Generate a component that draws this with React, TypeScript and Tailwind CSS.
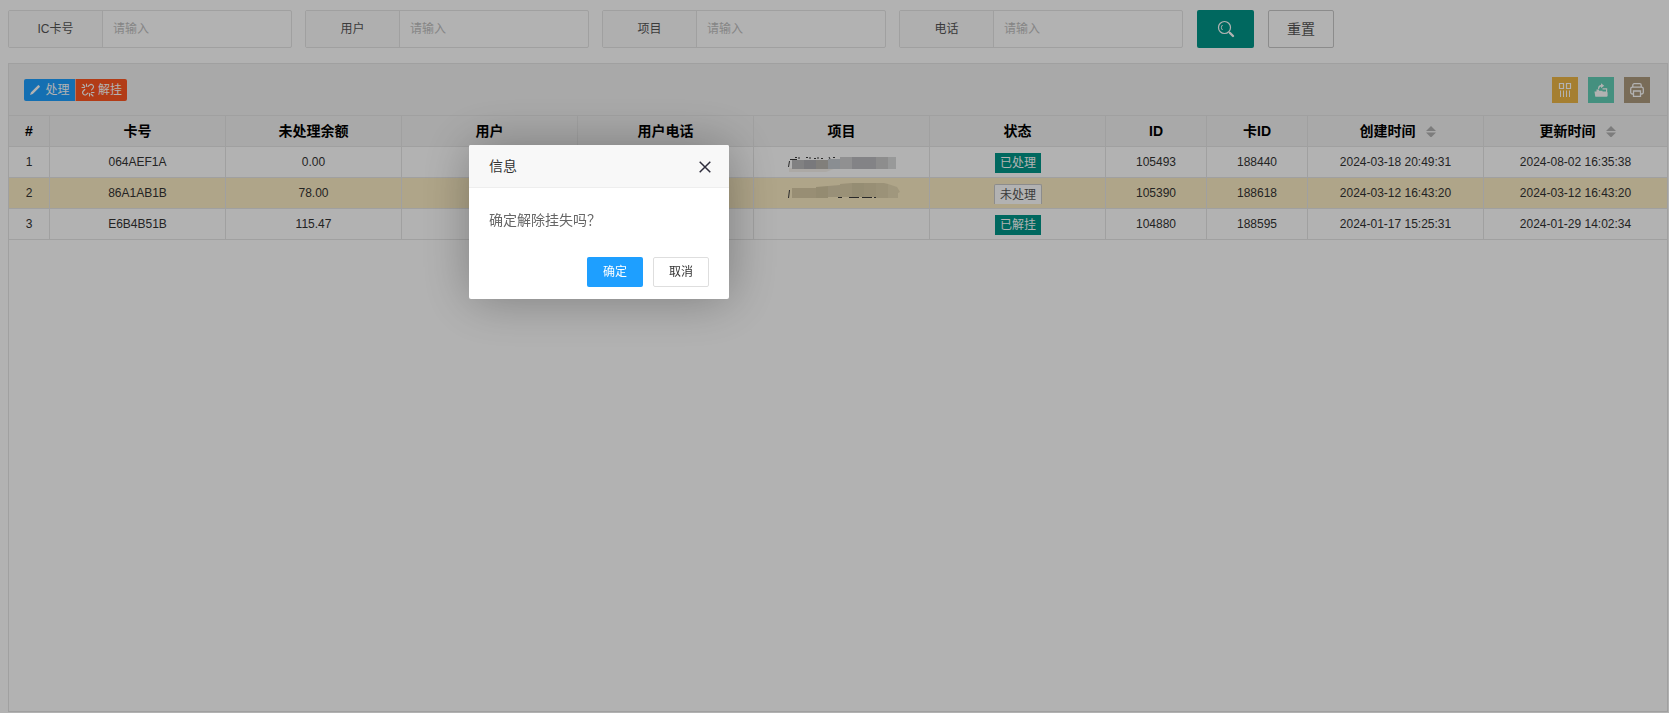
import React, { useState } from 'react';

interface Row {
  no: number;
  card: string;
  balance: string;
  status: string;
  id: string;
  cardId: string;
  created: string;
  updated: string;
}

const rows: Row[] = [
  { no: 1, card: '064AEF1A', balance: '0.00', status: '已处理', id: '105493', cardId: '188440', created: '2024-03-18 20:49:31', updated: '2024-08-02 16:35:38' },
  { no: 2, card: '86A1AB1B', balance: '78.00', status: '未处理', id: '105390', cardId: '188618', created: '2024-03-12 16:43:20', updated: '2024-03-12 16:43:20' },
  { no: 3, card: 'E6B4B51B', balance: '115.47', status: '已解挂', id: '104880', cardId: '188595', created: '2024-01-17 15:25:31', updated: '2024-01-29 14:02:34' },
];

const columns = [
  { title: '#', width: 'w-[41px]' },
  { title: '卡号', width: 'w-[176px]' },
  { title: '未处理余额', width: 'w-[176px]' },
  { title: '用户', width: 'w-[176px]' },
  { title: '用户电话', width: 'w-[176px]' },
  { title: '项目', width: 'w-[176px]' },
  { title: '状态', width: 'w-[176px]' },
  { title: 'ID', width: 'w-[101px]' },
  { title: '卡ID', width: 'w-[101px]' },
  { title: '创建时间', width: 'w-[176px]', sort: true },
  { title: '更新时间', width: '', sort: true },
];

const filters = [
  { key: 'ic', label: 'IC卡号' },
  { key: 'user', label: '用户' },
  { key: 'project', label: '项目' },
  { key: 'phone', label: '电话' },
];

const SearchIcon = () => (
  <svg width="18" height="18" viewBox="0 0 18 18" fill="none" stroke="currentColor">
    <circle cx="7.5" cy="7.5" r="6" strokeWidth="1.2" />
    <path d="M5.5 5A3.400 3.400 0 0 0 5.500 10" strokeWidth="1" />
    <path d="M12 12l1 1" strokeWidth="1.2" />
    <path d="M13 13l3 3" strokeWidth="2.4" strokeLinecap="round" />
  </svg>
);

const PencilIcon = () => (
  <svg width="12" height="12" viewBox="0 0 12 12" fill="currentColor">
    <path d="M1 11l1-2.800L8.800 1.400a.9.9 0 0 1 1.300 0l.5.5a.9.9 0 0 1 0 1.300L3.800 10z" />
  </svg>
);

const UnlinkIcon = () => (
  <svg width="14" height="14" viewBox="0 0 14 14" fill="none" stroke="currentColor" strokeWidth="1.1" strokeLinecap="round">
    <path d="M7 3.500L8.500 2.200a2.300 2.300 0 0 1 3.300 3.200L10.500 7" />
    <path d="M3.800 6.500L2.300 8a2.300 2.300 0 0 0 3.200 3.300L7 10" />
    <path d="M5.500 1v2.200M1 4.500h2.500M2 1.500l1.800 1.800M8.500 10.500V13M10.500 9.500H13M10 11l2 2" />
  </svg>
);

const ColumnsIcon = () => (
  <svg width="14" height="14" viewBox="0 0 14 14" fill="none" stroke="currentColor">
    <path d="M1.500.500h4v5h-4zM8.500.500h4v5h-4z" strokeWidth="1.200" />
    <path d="M2.500 7.500V14M5.500 7.500V14M8.500 7.500V14M11.500 7.500V14" />
  </svg>
);

const ExportIcon = () => (
  <svg width="14" height="14" viewBox="0 0 14 14" fill="currentColor">
    <path d="M.5 8.500h12l1 1v3.500a.8.8 0 0 1-.8.800H2a.8.8 0 0 1-.8-.6z" />
    <path d="M2.500 9V6.500H5v1.300h3.500V9z" />
    <path d="M8.500 5.200h4.700V13h-1.200V6.400H8.500z" />
    <path d="M4 6C4 3 5.300 2 7 2V.300l3.200 2.500L7 5.300V3.800C6 3.800 5.300 4.400 5.200 6z" />
  </svg>
);

const PrintIcon = () => (
  <svg width="14" height="14" viewBox="0 0 14 14" fill="none" stroke="currentColor" strokeWidth="1.3">
    <path d="M2.800 4V2.200A1.500 1.500 0 0 1 4.300.7h5.400a1.500 1.500 0 0 1 1.500 1.500V4" />
    <path d="M3.500 11h-1A1.800 1.800 0 0 1 .7 9.200V6a1.800 1.800 0 0 1 1.800-1.800h9A1.800 1.800 0 0 1 13.300 6v3.200a1.800 1.800 0 0 1-1.800 1.800h-1" />
    <path d="M3.500 8h7v5.300h-7z" />
  </svg>
);

const CloseIcon = () => (
  <svg width="12" height="14" viewBox="0 -2 12 14" fill="none" stroke="#2e2d3c" strokeWidth="1.5">
    <path d="M.7.7l10.600 10.600M11.300.7L.7 11.300" />
  </svg>
);

const SortIcon = () => (
  <svg width="10" height="12" viewBox="0 -1 10 12" fill="#b2b2b2">
    <path d="M0 5l5-5 5 5zM0 6.500h10l-5 5z" />
  </svg>
);

const tools = [
  { name: '筛选列', bg: 'bg-[#ecb647]', icon: <ColumnsIcon /> },
  { name: '导出', bg: 'bg-[#62cfb6]', icon: <ExportIcon /> },
  { name: '打印', bg: 'bg-[#ae9b7f]', icon: <PrintIcon /> },
];

// masked project names
const MaskedName = ({ no }: { no: number }) => {
  if (no === 1) {
    return (
      <svg className="block" width="114" height="20" viewBox="0 0 114 20">
        <path d="M.5 15l1-6M2 7.500h7M7 5.500h2M11 5v2M18 5.500h2M22 5v2M26 6.500h2M30 5v2M33 6.500h2M41 5l1 2M45 5.500h2" stroke="#3b3b3b" fill="none" />
        <path d="M1 16h47l-10 4H1z" fill="#f2eee6" opacity=".7" />
        <path d="M4 8h12v9H4z" fill="#b9b9bb" />
        <path d="M16 8h12v9H16z" fill="#aeaeb2" />
        <path d="M28 8h12v9H28z" fill="#b9b7b0" />
        <path d="M40 7h12v10H40z" fill="#c6ccd2" />
        <path d="M52 5h12v12H52z" fill="#cfcfd0" />
        <path d="M64 5h24v12H64z" fill="#bcbcc0" />
        <path d="M88 5h12v12H88z" fill="#cacaca" />
        <path d="M100 5h8v12h-8z" fill="#dadcdc" />
      </svg>
    );
  }
  if (no === 2) {
    return (
      <svg className="block" width="114" height="20" viewBox="0 0 114 20">
        <path d="M.5 15l1-8M50 14.500h4M61 14.500h10M74 14.500h10M86 14.500h2" stroke="#3b3b3b" fill="none" />
        <path d="M4 5h24V4v11H4z" fill="#dacca7" />
        <path d="M28 4l12-1v12H28z" fill="#d5c8a3" />
        <path d="M40 3l12-1v12H40z" fill="#dccfac" />
        <path d="M52 1l12-1v14H52z" fill="#ddd0ab" />
        <path d="M64 0h12v14H64z" fill="#d6caa5" />
        <path d="M76 0h12v14H76z" fill="#dacda8" />
        <path d="M88 0h8l4 1v14H88z" fill="#dfd2ad" />
        <path d="M100 1l9 3 3 5-2 1v5h-10z" fill="#e5d8b3" />
      </svg>
    );
  }
  return null;
};

const StatusTag = ({ status }: { status: string }) => {
  if (status === '未处理') {
    return (
      <button type="button" className="h-[20px] px-[5px] border border-b-0 border-[#c9c9c9] rounded-t-xs bg-white text-[#555] leading-[20px]">
        {status}
      </button>
    );
  }
  return (
    <button type="button" className="h-[20px] px-[5px] bg-[#009688] text-white leading-[20px]">
      {status}
    </button>
  );
};

const App: React.FC = () => {
  const [values, setValues] = useState<Record<string, string>>({});
  const [open, setOpen] = useState(true);

  return (
    <div className="h-screen flex flex-col pt-[10px] pl-2 pr-px pb-px bg-white text-xs text-[#333] font-['Liberation_Sans','Noto_Sans_CJK_SC',sans-serif]">
      <form className="flex gap-[14px] mb-[15px]" onSubmit={(e) => e.preventDefault()}>
        <div className="flex gap-[13px]">
          {filters.map((f) => (
            <div key={f.key} className="flex w-[284px] h-[38px] border border-[#e6e6e6] rounded-xs">
              <label htmlFor={f.key} className="w-[94px] shrink-0 border-r border-[#e6e6e6] bg-[#fbfbfb] text-center leading-[36px] text-[#555]">
                {f.label}
              </label>
              <input
                id={f.key}
                type="text"
                placeholder="请输入"
                className="min-w-0 flex-1 px-[10px] outline-none placeholder:text-[#bfbfbf]"
                value={values[f.key] || ''}
                onChange={(e) => setValues((prev) => ({ ...prev, [f.key]: e.target.value }))}
              />
            </div>
          ))}
        </div>
        <button type="submit" aria-label="搜索" className="flex items-center justify-center w-[57px] h-[38px] rounded-xs bg-[#009688] text-white">
          <SearchIcon />
        </button>
        <button type="button" onClick={() => setValues({})} className="w-[66px] h-[38px] border border-[#c9c9c9] rounded-xs bg-white text-sm text-[#555]">
          重置
        </button>
      </form>

      <div className="flex-1 min-h-0 border border-[#e6e6e6]">
        <div className="flex items-center justify-between h-[52px] pl-[15px] pr-[17px] border-b border-[#e6e6e6] bg-[#f2f2f2]">
          <div className="flex">
            <button type="button" className="flex items-center justify-center gap-1 w-[51px] h-[22px] rounded-l-xs bg-[#1e9fff] text-white">
              <PencilIcon />
              处理
            </button>
            <button type="button" onClick={() => setOpen(true)} className="flex items-center justify-center gap-[3px] w-[52px] h-[22px] border-l border-white/50 rounded-r-xs bg-[#ff5722] text-white">
              <UnlinkIcon />
              解挂
            </button>
          </div>
          <div className="flex gap-[10px]">
            {tools.map((t) => (
              <button key={t.name} type="button" aria-label={t.name} className={`flex items-center justify-center w-[26px] h-[26px] text-white ${t.bg}`}>
                {t.icon}
              </button>
            ))}
          </div>
        </div>

        <table className="w-full table-fixed border-separate border-spacing-0 text-center">
          <thead>
            <tr className="bg-[#f2f2f2] text-sm text-black">
              {columns.map((c) => (
                <th key={c.title} className={`h-[31px] p-0 border-b border-r last:border-r-0 border-[#e6e6e6] font-bold ${c.width}`}>
                  <div className={`flex items-center justify-center gap-[10px] ${c.sort ? 'pl-1' : ''}`}>
                    {c.title}
                    {c.sort && <SortIcon />}
                  </div>
                </th>
              ))}
            </tr>
          </thead>
          <tbody className="[&_td]:h-[31px] [&_td]:p-0 [&_td]:border-b [&_td]:border-r [&_td]:border-[#e6e6e6] [&_td:last-child]:border-r-0">
            {rows.map((r) => (
              <tr key={r.no} className={r.no === 2 ? 'bg-[#fbecc4]' : 'bg-white'}>
                <td>{r.no}</td>
                <td>{r.card}</td>
                <td>{r.balance}</td>
                <td></td>
                <td></td>
                <td>
                  <div className="pl-[34px]">
                    <MaskedName no={r.no} />
                  </div>
                </td>
                <td>
                  <div className="flex justify-center pt-px pl-px">
                    <StatusTag status={r.status} />
                  </div>
                </td>
                <td>{r.id}</td>
                <td>{r.cardId}</td>
                <td>{r.created}</td>
                <td>{r.updated}</td>
              </tr>
            ))}
          </tbody>
        </table>
      </div>

      {open && (
        <>
          <div className="fixed inset-0 bg-black/30" />
          <div role="dialog" aria-labelledby="dialog-title" className="fixed left-[469px] top-[145px] w-[260px] rounded-xs bg-white shadow-[1px_1px_50px_rgba(0,0,0,0.3)]">
            <div className="flex items-center justify-between h-[43px] pl-5 pr-[18px] border-b border-[#eee] rounded-t-xs bg-[#f8f8f8]">
              <h2 id="dialog-title" className="text-sm">信息</h2>
              <button type="button" aria-label="关闭" onClick={() => setOpen(false)}>
                <CloseIcon />
              </button>
            </div>
            <p className="p-5 text-sm leading-6 text-[#666]">确定解除挂失吗？</p>
            <div className="flex justify-end gap-[10px] pt-[5px] pr-5 pb-3">
              <button type="button" onClick={() => setOpen(false)} className="w-[56px] h-[30px] rounded-xs bg-[#1e9fff] text-white">
                确定
              </button>
              <button type="button" onClick={() => setOpen(false)} className="w-[56px] h-[30px] border border-[#dedede] rounded-xs bg-white">
                取消
              </button>
            </div>
          </div>
        </>
      )}
    </div>
  );
};

export default App;
